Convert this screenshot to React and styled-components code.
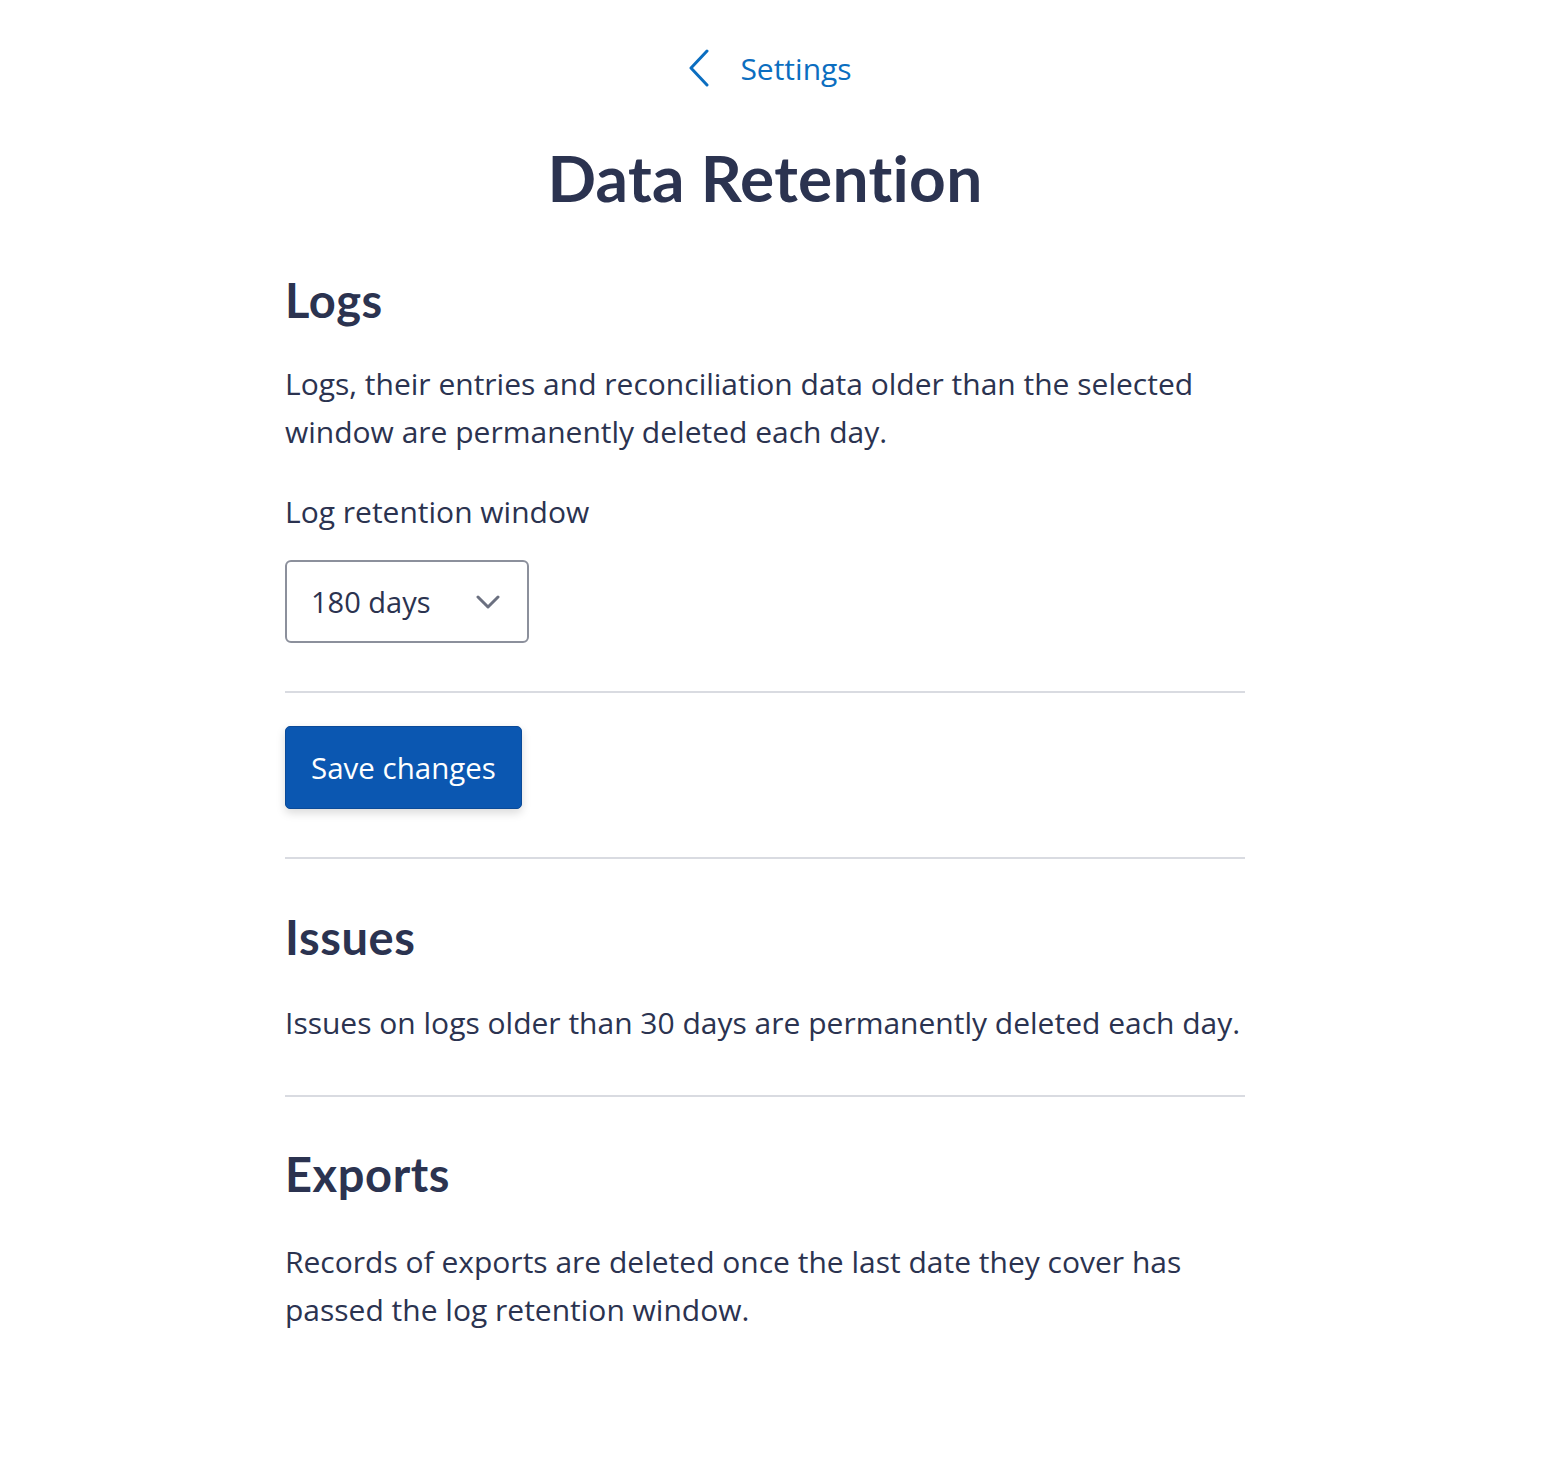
import React from "react";
import styled, { createGlobalStyle } from "styled-components";

const Global = createGlobalStyle`
  html, body { margin: 0; padding: 0; background: #fff; }
  body { font-family: "Open Sans", Lato, sans-serif; color: #2b3350; }
`;

const Page = styled.main`
  width: 960px;
  margin: 0 0 0 calc(50% - 495px);
  padding: 44px 0 120px;
`;

const Nav = styled.a`
  display: flex;
  align-items: center;
  justify-content: center;
  gap: 30px;
  padding-left: 10px;
  color: #0b6ec0;
  font-size: 30px;
  text-decoration: none;
  height: 48px;
  svg { display: block; }
`;

const Title = styled.h1`
  margin: 46px 0 0;
  text-align: center;
  font-family: Lato, sans-serif;
  font-size: 64px;
  font-weight: 700;
  line-height: 80px;
  letter-spacing: 0.3px;
`;

const Section = styled.section`
  padding: ${(p) => p.$pad || "40px 0 40px"};
  border-bottom: ${(p) => (p.$last ? "none" : "2px solid #d9dbe1")};
`;

const H2 = styled.h2`
  margin: 0;
  font-family: Lato, sans-serif;
  font-size: 47px;
  font-weight: 700;
  line-height: 56px;
  letter-spacing: 0.6px;
`;

const P = styled.p`
  margin: ${(p) => p.$top || "32px"} 0 0;
  font-size: 30px;
  line-height: 48px;
`;

const Label = styled.label`
  display: block;
  margin-top: 32px;
  font-size: 30px;
  line-height: 48px;
`;

const Select = styled.div`
  margin-top: 24px;
  width: 244px;
  height: 83px;
  box-sizing: border-box;
  border: 2px solid #8c909c;
  border-radius: 6px;
  display: flex;
  align-items: center;
  justify-content: space-between;
  padding: 0 27px 0 24px;
  font-size: 29px;
`;

const Button = styled.button`
  width: 237px;
  height: 83px;
  border: 1px solid #0a4a98;
  border-radius: 5px;
  background: #0b57b1;
  color: #fff;
  font-family: inherit;
  font-size: 29.5px;
  box-shadow: 0 4px 10px rgba(0, 0, 0, 0.15);
  cursor: pointer;
`;

export default function App() {
  return (
    <>
      <Global />
      <Page>
        <Nav href="#">
          <svg width="22" height="38" viewBox="0 0 22 38" fill="none">
            <path d="M19 2 L3 19 L19 36" stroke="#0b6ec0" strokeWidth="3" strokeLinecap="round" strokeLinejoin="round" />
          </svg>
          <span>Settings</span>
        </Nav>
        <Title>Data Retention</Title>
        <Section $pad="54px 0 48px">
          <H2>Logs</H2>
          <P>
            Logs, their entries and reconciliation data older than the selected
            window are permanently deleted each day.
          </P>
          <Label>Log retention window</Label>
          <Select>
            <span>180 days</span>
            <svg width="24" height="14" viewBox="0 0 24 14" fill="none">
              <path d="M2 2 L12 12 L22 2" stroke="#6b7080" strokeWidth="3" strokeLinecap="round" strokeLinejoin="round" />
            </svg>
          </Select>
        </Section>
        <Section $pad="33px 0 48px">
          <Button>Save changes</Button>
        </Section>
        <Section $pad="50px 0 48px">
          <H2>Issues</H2>
          <P $top="34px">Issues on logs older than 30 days are permanently deleted each day.</P>
        </Section>
        <Section $pad="49px 0 0" $last>
          <H2>Exports</H2>
          <P $top="36px">
            Records of exports are deleted once the last date they cover has
            passed the log retention window.
          </P>
        </Section>
      </Page>
    </>
  );
}
